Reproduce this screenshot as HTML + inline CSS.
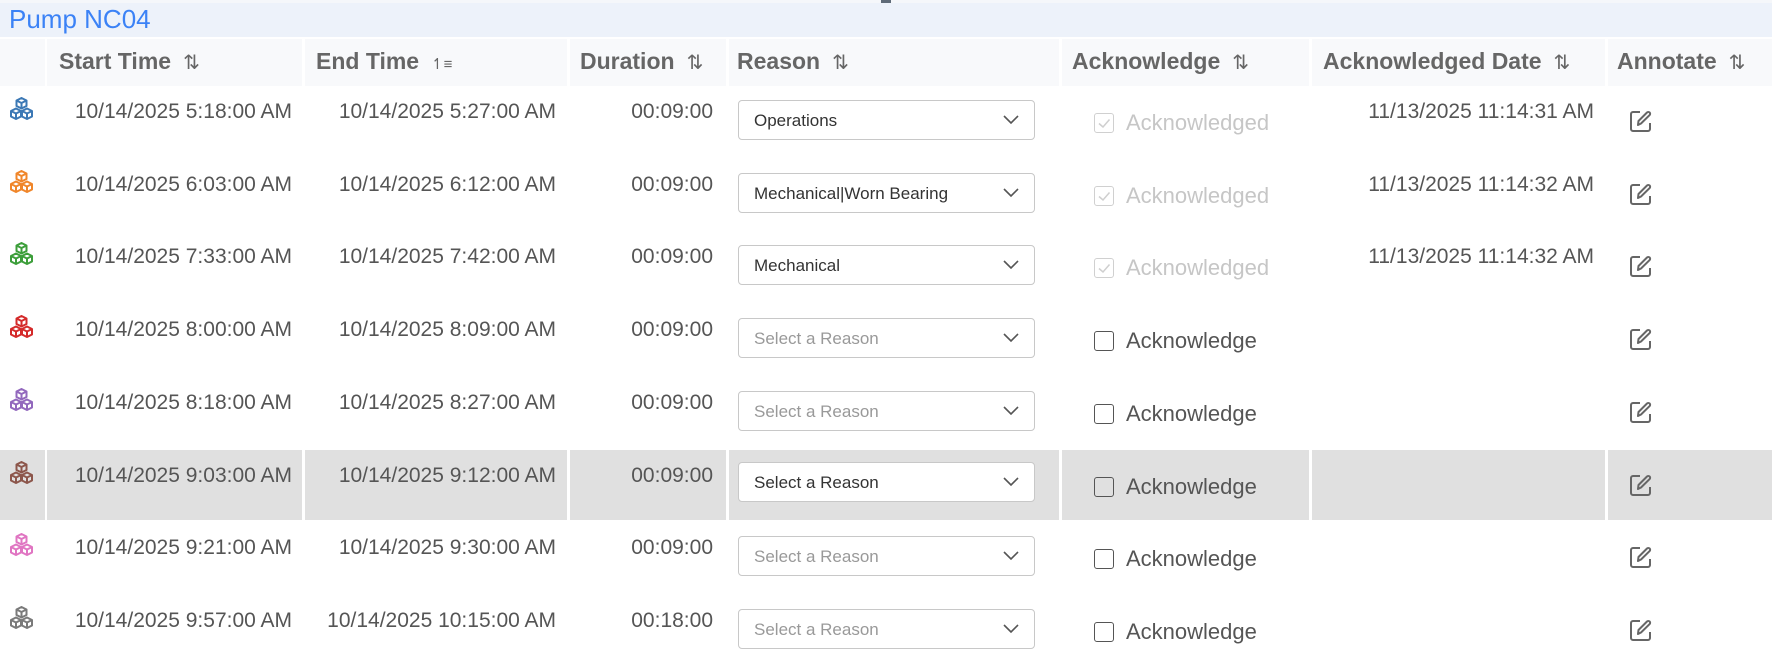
<!DOCTYPE html>
<html><head><meta charset="utf-8"><style>
*{margin:0;padding:0;box-sizing:border-box}
body{width:1772px;height:660px;overflow:hidden;background:#fff;font-family:"Liberation Sans",Arial,sans-serif;position:relative;color:#555}
.a{position:absolute;white-space:nowrap}
.band{left:0;top:3px;width:1772px;height:34px;background:#edf2fa}
.title{left:9px;top:4px;font-size:26px;color:#3b82f6}
.hc{position:absolute;top:39px;height:47px;background:#f8f9fb}
.ht{position:absolute;top:48px;font-size:23px;font-weight:bold;color:#666}
.ht span{font-weight:normal;font-size:20px;color:#666;margin-left:12px}
.dt{font-size:21px;color:#555}
.dd{position:absolute;left:738px;width:297px;height:40px;border:1px solid #c8c8c8;border-radius:4px;background:#fff;font-size:17px;color:#333;padding:10px 0 0 15px}
.dd.ph{color:#999}
.dd svg{position:absolute;right:14px;top:14px}
.ack{font-size:22px;color:#555}
.ack.dis{color:#c6c6c6}
.cb{display:inline-block;width:20px;height:20px;border:1.5px solid #555;border-radius:3px;vertical-align:-3px;margin-right:12px;position:relative}
.dis .cb{border-color:#d0d0d0}
.hl{position:absolute;top:450px;height:70px;background:#e0e0e0}
</style></head><body>
<div class="a" style="left:0;top:0;width:1772px;height:3px;background:#f5f7fa"></div>
<div class="a" style="left:881px;top:0;width:10px;height:3px;background:#5f6b78"></div>
<div class="a band"></div>
<div class="a title">Pump NC04</div>

<div class="hc" style="left:0;width:45px"></div>
<div class="hc" style="left:47px;width:255px"></div>
<div class="hc" style="left:305px;width:262px"></div>
<div class="hc" style="left:570px;width:156px"></div>
<div class="hc" style="left:729px;width:330px"></div>
<div class="hc" style="left:1062px;width:247px"></div>
<div class="hc" style="left:1312px;width:293px"></div>
<div class="hc" style="left:1608px;width:164px"></div>
<div class="ht" style="left:59px">Start Time<span>⇅</span></div>
<div class="ht" style="left:316px">End Time<span style="font-size:15px">↿≡</span></div>
<div class="ht" style="left:580px">Duration<span>⇅</span></div>
<div class="ht" style="left:737px">Reason<span>⇅</span></div>
<div class="ht" style="left:1072px">Acknowledge<span>⇅</span></div>
<div class="ht" style="left:1323px">Acknowledged Date<span>⇅</span></div>
<div class="ht" style="left:1617px">Annotate<span>⇅</span></div>

<div class="hl" style="left:0;width:45px"></div>
<div class="hl" style="left:47px;width:255px"></div>
<div class="hl" style="left:305px;width:262px"></div>
<div class="hl" style="left:570px;width:156px"></div>
<div class="hl" style="left:729px;width:330px"></div>
<div class="hl" style="left:1062px;width:247px"></div>
<div class="hl" style="left:1312px;width:293px"></div>
<div class="hl" style="left:1608px;width:164px"></div>

<svg width="0" height="0" style="position:absolute"><defs>
<g id="cube"><path d="M0,-5 L5,-2.5 L5,3 L0,5.5 L-5,3 L-5,-2.5 Z M-5,-2.5 L0,0 L5,-2.5 M0,0 L0,5.5" fill="none" stroke-width="2" stroke-linejoin="round"/></g>
<g id="cubes"><use href="#cube" x="12.5" y="6"/><use href="#cube" x="7" y="16.5"/><use href="#cube" x="18" y="16.5"/></g>
<g id="chev"><path d="M1,1 L8,8 L15,1" fill="none" stroke="#555" stroke-width="1.6"/></g>
<g id="edit"><path d="M10,2 H3 a2,2 0 0 0 -2,2 V19 a2,2 0 0 0 2,2 H18 a2,2 0 0 0 2,-2 V13" fill="none" stroke="#666" stroke-width="2"/><path d="M8,15 L8.5,11 L17,2.5 a1.8,1.8 0 0 1 2.6,2.6 L11,13.5 Z" fill="none" stroke="#666" stroke-width="2" stroke-linejoin="round"/></g>
<g id="chk"><path d="M4,9.5 L8,13 L14.5,5.5" fill="none" stroke="#cfcfcf" stroke-width="1.5"/></g>
</defs></svg>

<div id="rows"></div>
<script>
var R=[
["#3b78b5","5:18:00 AM","5:27:00 AM","00:09:00","Operations",1,"11/13/2025 11:14:31 AM"],
["#f0862a","6:03:00 AM","6:12:00 AM","00:09:00","Mechanical|Worn Bearing",1,"11/13/2025 11:14:32 AM"],
["#3c9e3a","7:33:00 AM","7:42:00 AM","00:09:00","Mechanical",1,"11/13/2025 11:14:32 AM"],
["#d42a2a","8:00:00 AM","8:09:00 AM","00:09:00","",0,""],
["#9268bd","8:18:00 AM","8:27:00 AM","00:09:00","",0,""],
["#8c564b","9:03:00 AM","9:12:00 AM","00:09:00","",2,""],
["#e075c2","9:21:00 AM","9:30:00 AM","00:09:00","",0,""],
["#7a7a7a","9:57:00 AM","10:15:00 AM","00:18:00","",0,""]];
var h="";
R.forEach(function(r,i){
var t=Math.round(86+i*72.7);
h+='<svg class="a" style="left:9px;top:'+(t+11)+'px" width="26" height="25" stroke="'+r[0]+'"><use href="#cubes"/></svg>';
h+='<div class="a dt" style="right:'+(1772-292)+'px;top:'+(t+14)+'px">10/14/2025 '+r[1]+'</div>';
h+='<div class="a dt" style="right:'+(1772-556)+'px;top:'+(t+14)+'px">10/14/2025 '+r[2]+'</div>';
h+='<div class="a dt" style="right:'+(1772-713)+'px;top:'+(t+14)+'px">'+r[3]+'</div>';
var dt=(i==5)?t+12:t+14;
h+='<div class="dd'+(r[4]||i==5?'':' ph')+'" style="top:'+dt+'px">'+(r[4]||'Select a Reason')+'<svg width="17" height="10"><use href="#chev"/></svg></div>';
if(r[5]==1) h+='<div class="a ack dis" style="left:1094px;top:'+(t+24)+'px"><span class="cb"><svg width="18" height="18" style="position:absolute;left:0;top:0"><use href="#chk"/></svg></span>Acknowledged</div>';
else h+='<div class="a ack" style="left:1094px;top:'+(t+24)+'px"><span class="cb"></span>Acknowledge</div>';
if(r[6]) h+='<div class="a dt" style="right:'+(1772-1594)+'px;top:'+(t+14)+'px">'+r[6]+'</div>';
h+='<svg class="a" style="left:1630px;top:'+(t+24)+'px" width="22" height="23"><use href="#edit"/></svg>';
});
document.getElementById("rows").innerHTML=h;
</script>
</body></html>
